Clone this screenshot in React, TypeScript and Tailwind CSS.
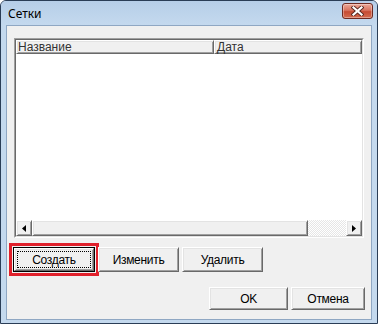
import React from "react";

const face3d =
  "bg-[#f0f0f0] border border-t-white border-l-white border-r-[#696969] border-b-[#696969] shadow-[inset_1px_1px_0_#e3e3e3,inset_-1px_-1px_0_#a0a0a0]";

function Btn({ label, w }: { label: string; w: string }) {
  return (
    <div className={`${face3d} ${w} h-full flex items-center justify-center text-[12px] tracking-[-0.3px] text-black`}>
      {label}
    </div>
  );
}

function Arrow({ dir }: { dir: "left" | "right" }) {
  return (
    <div className={`${face3d} w-[16px] h-full flex items-center justify-center shrink-0`}>
      <svg width="4" height="7" viewBox="0 0 4 7">
        {dir === "left" ? (
          <polygon points="4,0 4,7 0,3.5" fill="#000" />
        ) : (
          <polygon points="0,0 0,7 4,3.5" fill="#000" />
        )}
      </svg>
    </div>
  );
}

export default function App() {
  return (
    <div className="w-[378px] h-[324px] flex flex-col bg-[#c4d9ee] border border-[#2a3d56] rounded-t-[6px] overflow-hidden font-['Liberation_Sans',Arial,sans-serif]">
      {/* Title bar */}
      <div className="h-[24px] shrink-0 flex items-start justify-between pl-[7px] pr-[4px] bg-[linear-gradient(#b6cee8,#c4d9ee)]">
        <span className="mt-[5px] text-[12px] leading-[16px] text-black font-['Noto_Sans',sans-serif]">Сетки</span>
        <div className="mt-[2px] w-[31px] h-[16px] rounded-[3px] border border-[#6e2a22] bg-[linear-gradient(#eca999,#d8735f_45%,#c64b33_55%,#d46c50)] flex items-center justify-center shadow-[inset_0_0_0_1px_rgba(255,255,255,0.35)]">
          <svg width="13" height="10" viewBox="0 0 13 10">
            <path d="M2.5 1.5 L10.5 8.5 M10.5 1.5 L2.5 8.5" stroke="#5a2a22" strokeWidth="4" strokeLinecap="square" />
            <path d="M2.5 1.5 L10.5 8.5 M10.5 1.5 L2.5 8.5" stroke="#ffffff" strokeWidth="2.2" strokeLinecap="square" />
          </svg>
        </div>
      </div>

      {/* Client area */}
      <div className="flex-1 mx-[5px] mb-[3px] bg-[#f0f0f0] border border-[#8fa7c3] flex flex-col">
        {/* List view */}
        <div className="mt-[12px] ml-[7px] w-[350px] h-[200px] border border-t-[#a0a0a0] border-l-[#a0a0a0] border-r-white border-b-white flex">
          <div className="flex-1 border border-t-[#696969] border-l-[#696969] border-r-[#e3e3e3] border-b-[#e3e3e3] bg-white flex flex-col">
            <div className="h-[14px] flex shrink-0">
              <div className={`${face3d} w-[198px] h-full flex items-center pl-[1px] text-[12px] text-[#333333] leading-none`}>
                Название
              </div>
              <div className={`${face3d} flex-1 h-full flex items-center pl-[2px] text-[12px] text-[#333333] leading-none`}>
                Дата
              </div>
            </div>
            <div className="flex-1 bg-white" />
            <div className="h-[16px] flex shrink-0">
              <Arrow dir="left" />
              <div className={`${face3d} w-[276px] h-full shrink-0`} />
              <div className="flex-1 h-full bg-[repeating-conic-gradient(#e6e6e6_0_25%,#ffffff_0_50%)] bg-[length:2px_2px]" />
              <Arrow dir="right" />
            </div>
          </div>
        </div>

        {/* Action buttons */}
        <div className="mt-[9px] ml-[6px] h-[25px] flex gap-[3px]">
          <div className="w-[82px] h-full border border-black outline-solid outline-[3px] outline-[#e0202b] outline-offset-[1px] flex">
            <div className={`${face3d} flex-1 p-[2px] flex`}>
              <div className="flex-1 border border-dotted border-black flex items-center justify-center text-[12px] tracking-[-0.3px] text-black">
                Создать
              </div>
            </div>
          </div>
          <Btn label="Изменить" w="w-[81px]" />
          <Btn label="Удалить" w="w-[81px]" />
        </div>

        {/* Dialog buttons */}
        <div className="mt-[15px] mr-[6px] h-[23px] flex justify-end gap-[3px]">
          <Btn label="OK" w="w-[79px]" />
          <Btn label="Отмена" w="w-[74px]" />
        </div>
      </div>
    </div>
  );
}
